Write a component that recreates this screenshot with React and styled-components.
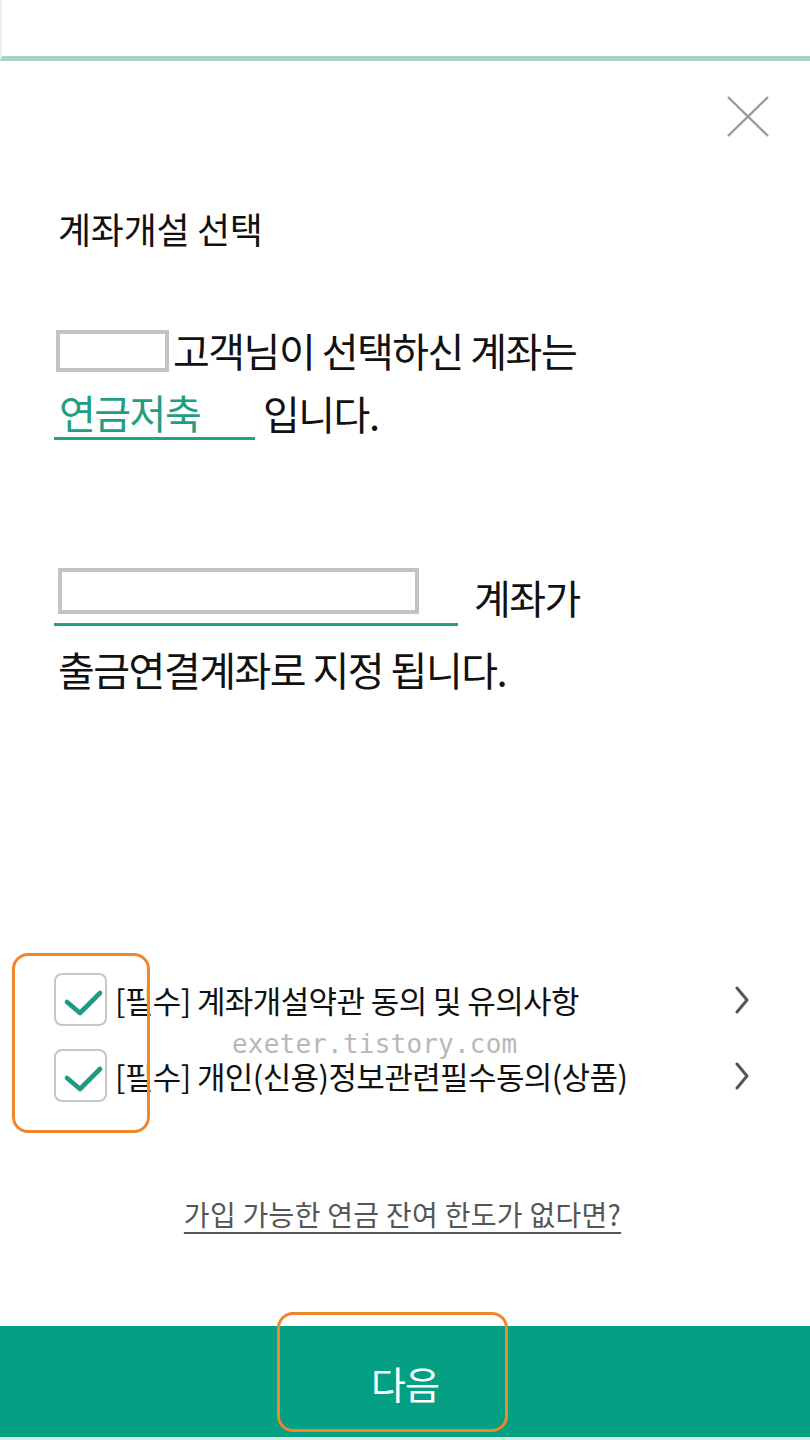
import React from "react";
import styled, { createGlobalStyle } from "styled-components";

const GlobalStyle = createGlobalStyle`
  html, body {
    margin: 0;
    padding: 0;
    background: #ffffff;
  }
  body {
    font-family: "Noto Sans CJK KR", "Noto Sans", sans-serif;
    color: #111;
  }
`;

export default function App() {
  return (
    <Page>
      <GlobalStyle />
      <TopBar />
      <Content>
        <CloseRow>
          <CloseButton aria-label="닫기">
            <svg width="42" height="41" viewBox="0 0 42 41">
              <path d="M1 1 L41 40 M41 1 L1 40" stroke="#9a9a9a" strokeWidth="2.4" fill="none" />
            </svg>
          </CloseButton>
        </CloseRow>

        <Title>계좌개설 선택</Title>

        <Sentence>
          <Line>
            <Blank $w={113} $h={42} />
            <Words $gap={4}>고객님이 선택하신 계좌는</Words>
          </Line>
          <Line>
            <Chosen $w={201}>연금저축</Chosen>
            <Words $gap={8}>입니다.</Words>
          </Line>
        </Sentence>

        <Sentence $top={123}>
          <Line $h={58}>
            <Field $w={404}>
              <Blank $w={361} $h={46} />
            </Field>
            <Words $gap={16}>계좌가</Words>
          </Line>
          <Line $top={12}>
            <Words>출금연결계좌로 지정 됩니다.</Words>
          </Line>
        </Sentence>

        <AgreeList>
          <AgreeRow>
            <CheckBox>
              <svg width="49" height="49" viewBox="0 0 49 49">
                <path d="M11 27 L24 38 L44 18" stroke="#1c9b82" strokeWidth="4.6" fill="none" strokeLinecap="round" strokeLinejoin="round" />
              </svg>
            </CheckBox>
            <AgreeText>[필수] 계좌개설약관 동의 및 유의사항</AgreeText>
            <Chevron />
          </AgreeRow>
          <AgreeRow>
            <CheckBox>
              <svg width="49" height="49" viewBox="0 0 49 49">
                <path d="M11 27 L24 38 L44 18" stroke="#1c9b82" strokeWidth="4.6" fill="none" strokeLinecap="round" strokeLinejoin="round" />
              </svg>
            </CheckBox>
            <AgreeText>[필수] 개인(신용)정보관련필수동의(상품)</AgreeText>
            <Chevron />
          </AgreeRow>
          <Watermark>exeter.tistory.com</Watermark>
          <Marker $left={-42} $top={-20} $w={138} $h={180} />
        </AgreeList>

        <LimitLink href="#">가입 가능한 연금 잔여 한도가 없다면?</LimitLink>
      </Content>

      <Footer>
        <NextButton>다음</NextButton>
        <Marker $left={277} $top={-14} $w={231} $h={120} />
      </Footer>
    </Page>
  );
}

function Chevron() {
  return (
    <ChevronIcon width="16" height="28" viewBox="0 0 16 28">
      <path d="M3 2 L13 14 L3 26" stroke="#555" strokeWidth="3" fill="none" strokeLinecap="round" strokeLinejoin="round" />
    </ChevronIcon>
  );
}

const Page = styled.div`
  width: 810px;
  height: 1440px;
  display: flex;
  flex-direction: column;
  overflow: hidden;
  background: #fff;
`;

const TopBar = styled.div`
  height: 56px;
  flex-shrink: 0;
  border-left: 2px solid #eeeeee;
  border-bottom: 5px solid #a8d3c6;
  background: #fff;
`;

const Content = styled.main`
  display: flex;
  flex-direction: column;
  padding: 0 60px 0 58px;
`;

const CloseRow = styled.div`
  display: flex;
  justify-content: flex-end;
  margin-top: 35px;
  margin-right: -19px;
`;

const CloseButton = styled.button`
  border: none;
  background: none;
  padding: 0;
  display: flex;
  cursor: pointer;
`;

const Title = styled.h1`
  margin: 70px 0 0;
  font-size: 36px;
  font-weight: 400;
  letter-spacing: -0.3px;
  line-height: 42px;
  color: #111;
`;

const Sentence = styled.div`
  display: flex;
  flex-direction: column;
  margin-top: ${(p) => p.$top ?? 70}px;
  margin-left: -4px;
`;

const Line = styled.div`
  display: flex;
  align-items: center;
  height: ${(p) => p.$h ?? 63}px;
  margin-top: ${(p) => p.$top ?? 0}px;
`;

const Words = styled.span`
  font-size: 40px;
  font-weight: 400;
  letter-spacing: -1.5px;
  line-height: 63px;
  color: #111;
  margin-left: ${(p) => p.$gap ?? 4}px;
  white-space: nowrap;
`;

const Blank = styled.span`
  display: inline-block;
  box-sizing: border-box;
  width: ${(p) => p.$w}px;
  height: ${(p) => p.$h}px;
  border: 4px solid #c3c3c3;
  background: #fff;
  margin-left: 2px;
`;

const Chosen = styled.span`
  box-sizing: border-box;
  width: ${(p) => p.$w}px;
  padding-left: 5px;
  font-size: 40px;
  font-weight: 400;
  letter-spacing: -1.5px;
  line-height: 50px;
  color: #1f9e83;
  border-bottom: 3px solid #26a088;
`;

const Field = styled.span`
  display: flex;
  box-sizing: border-box;
  width: ${(p) => p.$w}px;
  padding: 0 0 9px 2px;
  border-bottom: 3px solid #26a088;
`;

const AgreeList = styled.div`
  position: relative;
  display: flex;
  flex-direction: column;
  gap: 23px;
  margin-top: 272px;
  margin-left: -4px;
`;

const AgreeRow = styled.div`
  display: flex;
  align-items: center;
  height: 53px;
`;

const CheckBox = styled.span`
  box-sizing: border-box;
  width: 53px;
  height: 53px;
  flex-shrink: 0;
  border: 2px solid #c6c6c6;
  border-radius: 8px;
  background: #fff;
  display: flex;
  align-items: center;
  justify-content: center;
`;

const AgreeText = styled.span`
  flex: 1;
  margin-left: 8px;
  font-size: 31px;
  letter-spacing: -0.6px;
  line-height: 36px;
  color: #111;
  white-space: nowrap;
`;

const ChevronIcon = styled.svg`
  flex-shrink: 0;
  margin-right: 0;
`;

const Watermark = styled.span`
  position: absolute;
  left: 178px;
  top: 59px;
  font-family: "DejaVu Sans Mono", "Liberation Mono", monospace;
  font-size: 26px;
  line-height: 24px;
  color: #b8b8b8;
  letter-spacing: 0.2px;
  pointer-events: none;
`;

const Marker = styled.span`
  position: absolute;
  left: ${(p) => p.$left}px;
  top: ${(p) => p.$top}px;
  width: ${(p) => p.$w}px;
  height: ${(p) => p.$h}px;
  box-sizing: border-box;
  border: 3.5px solid #f0862a;
  border-radius: 16px;
  pointer-events: none;
`;

const LimitLink = styled.a`
  align-self: center;
  margin-top: 92px;
  margin-left: -3px;
  font-size: 28px;
  letter-spacing: 0.3px;
  line-height: 40px;
  color: #555;
  text-decoration: underline;
  text-underline-offset: 6px;
  text-decoration-thickness: 2px;
`;

const Footer = styled.footer`
  position: relative;
  margin-top: auto;
  height: 111px;
  flex-shrink: 0;
  background: #05a083;
  border-bottom: 3px solid #d4ece6;
  display: flex;
  align-items: center;
  justify-content: center;
`;

const NextButton = styled.button`
  border: none;
  background: none;
  color: #fff;
  font-family: "Noto Sans CJK KR", sans-serif;
  font-size: 38px;
  letter-spacing: -1px;
  padding: 0;
  margin-top: 2px;
  cursor: pointer;
`;
